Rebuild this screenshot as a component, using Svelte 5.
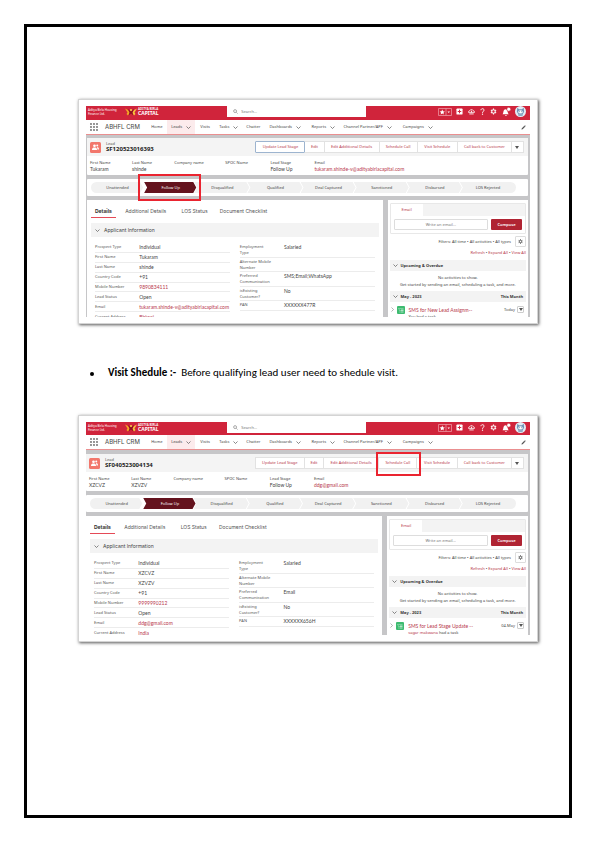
<script>
  const nav = [
    { t: 'Home' },
    { t: 'Leads', menu: true, on: true },
    { t: 'Visits' },
    { t: 'Tasks', menu: true },
    { t: 'Chatter' },
    { t: 'Dashboards', menu: true },
    { t: 'Reports', menu: true },
    { t: 'Channel Partner/APF', menu: true },
    { t: 'Campaigns', menu: true }
  ];
  const actions = ['Update Lead Stage', 'Edit', 'Edit Additional Details', 'Schedule Call', 'Visit Schedule', 'Call back to Customer'];
  const stages = ['Unattended', 'Follow Up', 'Disqualified', 'Qualified', 'Deal Captured', 'Sanctioned', 'Disbursed', 'LOS Rejected'];
  const tabs = ['Details', 'Additional Details', 'LOS Status', 'Document Checklist'];

  const leads = [
    {
      key: 'a', id: 'SF120523016393', first: 'Tukaram', last: 'shinde',
      email: 'tukaram.shinde-v@adityabirlacapital.com', mobile: '9890834111', address: 'Bhiwai',
      comm: 'SMS;Email;WhatsApp', pan: 'XXXXXX477R',
      task: 'SMS for New Lead Assignm--', date: 'Today', who: '', had: 'You had a task',
      markStage: 'Follow Up', markAction: '', focus: true
    },
    {
      key: 'b', id: 'SF040523004134', first: 'XZCVZ', last: 'XZVZV',
      email: 'ddg@gmail.com', mobile: '9999990212', address: 'India',
      comm: 'Email', pan: 'XXXXXX656H',
      task: 'SMS for Lead Stage Update --', date: '04-May', who: 'sagar makwana', had: 'had a task',
      markStage: '', markAction: 'Schedule Call', focus: false
    }
  ];

  const summary = (l) => [
    ['First Name', l.first], ['Last Name', l.last], ['Company name', ''],
    ['SPOC Name', ''], ['Lead Stage', 'Follow Up'], ['Email', l.email, true]
  ];
  const left = (l) => [
    ['Prospect Type', 'Individual'], ['First Name', l.first], ['Last Name', l.last], ['Country Code', '+91'],
    ['Mobile Number', l.mobile, true], ['Lead Status', 'Open'], ['Email', l.email, true], ['Current Address', l.address, true]
  ];
  const right = (l) => [
    ['Employment\nType', 'Salaried'], ['Alternate Mobile\nNumber', ''], ['Preferred\nCommunication', l.comm],
    ['isExisting\nCustomer?', 'No'], ['PAN', l.pan]
  ];
</script>

{#snippet chevron()}
  <svg class="chev" viewBox="0 0 10 6" aria-hidden="true"><path d="M1 1l4 4 4-4" fill="none" stroke="currentColor" stroke-width="1.4" /></svg>
{/snippet}

{#snippet gear()}
  <svg viewBox="0 0 16 16" aria-hidden="true">
    <circle cx="8" cy="8" r="4" fill="none" stroke="currentColor" stroke-width="2.4" />
    <path d="M8 1v3M8 12v3M2 4.500l2.500 1.500M11.500 10l2.500 1.500M2 11.500l2.500-1.500M11.500 6l2.500-1.500" stroke="currentColor" stroke-width="2.600" />
  </svg>
{/snippet}

{#snippet screen(l)}
  <section class="shot">
    <div class="app" class:inset={l.key === 'a'}>
      <header class="top">
        <p class="firm">Aditya Birla Housing<br />Finance Ltd.</p>
        <div class="logo">
          <svg viewBox="0 0 24 16" aria-hidden="true">
            <path d="M0 1l6 3 4 6-4 5-3-3 2-3z" fill="#f4a526" />
            <path d="M24 1l-6 3-4 6 4 5 3-3-2-3z" fill="#f7c23c" />
            <path d="M6 2l6 5 6-5-3 7 2 6-5-4-5 4 2-6z" fill="#8c1220" />
            <circle cx="12" cy="4" r="2" fill="#f9d34a" />
          </svg>
          <p><small>ADITYA BIRLA</small><b>CAPITAL</b></p>
        </div>
        <label class="search">
          <svg viewBox="0 0 12 12" aria-hidden="true"><circle cx="5" cy="5" r="3.500" fill="none" stroke="#666" stroke-width="1.300" /><path d="M8 8l3 3" stroke="#666" stroke-width="1.300" /></svg>
          <input type="search" placeholder="Search..." aria-label="Search" />
        </label>
        <div class="tools">
          <button class="fav" aria-label="Favorites">
            <svg viewBox="0 0 28 16" aria-hidden="true">
              <path d="M1 1h26v14H1zM16 1v14" fill="none" stroke="#ee9aa5" stroke-width="1.500" />
              <path d="M8.500 3l1.500 3.400 3.700.4-2.800 2.500.8 3.700-3.200-1.900-3.200 1.900.8-3.700-2.800-2.500 3.700-.4zM19 7h5l-2.500 3z" fill="#fff" />
            </svg>
          </button>
          <button aria-label="Add"><svg viewBox="0 0 16 16" aria-hidden="true"><rect x="1" y="1" width="14" height="14" rx="2" fill="#fff" /><path d="M8 4v8M4 8h8" stroke="#d0243b" stroke-width="2.200" /></svg></button>
          <button aria-label="Guidance"><svg viewBox="0 0 16 16" aria-hidden="true"><path d="M1 10a4 4 0 0 1 3-4 4.500 4.500 0 0 1 8 0 4 4 0 0 1 3 4z" fill="none" stroke="#fff" stroke-width="1.800" /><path d="M3 13.500h10M8 6v4" stroke="#fff" stroke-width="2" /></svg></button>
          <button aria-label="Help"><svg viewBox="0 0 16 16" aria-hidden="true"><path d="M4.500 5c0-5 7.500-4 7 0 0 2.500-3.500 2.500-3.500 6" fill="none" stroke="#fff" stroke-width="2.200" /><circle cx="8" cy="14" r="1.500" fill="#fff" /></svg></button>
          <button aria-label="Setup">{@render gear()}</button>
          <button aria-label="Notifications" class="bell"><svg viewBox="0 0 16 16" aria-hidden="true"><path d="M1 13c2-2 1-9 5-9s4 7 6 9zM5 14h4l-2 2z" fill="#fff" /><circle cx="12" cy="4" r="3.500" fill="#fff" stroke="#d0243b" stroke-width="1" /></svg></button>
          <button aria-label="Profile" class="me">
            <svg viewBox="0 0 24 24" aria-hidden="true"><circle cx="12" cy="12" r="12" fill="#e3edf5" /><path d="M5 4l4 3h6l4-3 1 8-3 6H7l-3-6z" fill="#7195b8" /><ellipse cx="12" cy="13" rx="5" ry="3.500" fill="#fff" /><circle cx="10" cy="12.500" r="1" fill="#3a5878" /><circle cx="14" cy="12.500" r="1" fill="#3a5878" /><path d="M6 20q6 4 12 0l-2-3H8z" fill="#8dabc6" /></svg>
          </button>
        </div>
      </header>

      <nav>
        <svg class="waffle" viewBox="0 0 16 16" aria-hidden="true">
          {#each [2, 8, 14] as y}{#each [2, 8, 14] as x}<circle cx={x} cy={y} r="1.800" fill="#666" />{/each}{/each}
        </svg>
        <span class="brand">ABHFL CRM</span>
        {#each nav as n}
          <a href="#{n.t}" class:on={n.on}>{n.t}{#if n.menu}{@render chevron()}{/if}</a>
        {/each}
        <svg class="pencil" viewBox="0 0 12 12" aria-hidden="true"><path d="M1 11l1-3 6-6 2 2-6 6zM8.500 1.500l1-1 2 2-1 1z" fill="#555" /></svg>
      </nav>

      <div class="body">
        <section class="card lead">
          <div class="head">
            <svg class="badge" viewBox="0 0 22 22" aria-hidden="true"><rect width="22" height="22" rx="3" fill="#f2776c" /><circle cx="9" cy="7.500" r="2.700" fill="#fff" /><path d="M4 16c0-4 2-5 5-5s5 1 5 5z" fill="#fff" /><circle cx="14.500" cy="7" r="2" fill="#fff" /><path d="M15 15h3c0-3-1-5-4-5z" fill="#fff" /></svg>
            <h2><span>Lead</span>{l.id}</h2>
            <div class="actions">
              {#each actions as a, i}
                <div class="cell"><button class:focus={l.focus && i === 0}>{a}</button>{#if a === l.markAction}<i class="mark action"></i>{/if}</div>
              {/each}
              <div class="cell"><button aria-label="More actions"><svg viewBox="0 0 8 6" aria-hidden="true"><path d="M0 0h8L4 6z" fill="#555" /></svg></button></div>
            </div>
          </div>
          <dl class="summary">
            {#each summary(l) as [k, v, link]}
              <div><dt>{k}</dt><dd>{#if link}<a href="mailto:{v}">{v}</a>{:else}{v}{/if}</dd></div>
            {/each}
          </dl>
        </section>

        <ol class="card path">
          {#each stages as s}
            <li><button class:current={s === 'Follow Up'}>{s}</button>{#if s === l.markStage}<i class="mark stage"></i>{/if}</li>
          {/each}
        </ol>

        <div class="cols">
          <section class="main">
            <div class="tabs">
              {#each tabs as t, i}<div><a href="#{t}" class:on={i === 0}>{t}</a></div>{/each}
            </div>
            <h3>{@render chevron()}Applicant Information</h3>
            <div class="info">
              <dl class="left">
                {#each left(l) as [k, v, link]}
                  <div><dt>{k}</dt><dd>{#if link}<a href="#{k}">{v}</a>{:else}{v}{/if}</dd></div>
                {/each}
              </dl>
              <dl class="right">
                {#each right(l) as [k, v]}<div><dt>{k}</dt><dd>{v}</dd></div>{/each}
              </dl>
            </div>
          </section>

          <aside>
            <div class="mail">
              <div class="strip"><a href="#email">Email</a></div>
              <div class="write">
                <input type="text" placeholder="Write an email..." aria-label="Write an email" />
                <button>Compose</button>
              </div>
            </div>
            <div class="filters"><span>Filters: All time • All activities • All types</span><button aria-label="Filter settings">{@render gear()}</button></div>
            <p class="links"><a href="#refresh">Refresh</a> • <a href="#expand">Expand All</a> • <a href="#all">View All</a></p>
            <h4>{@render chevron()}Upcoming &amp; Overdue</h4>
            <p class="none">No activities to show.<br />Get started by sending an email, scheduling a task, and more.</p>
            <h4>{@render chevron()}May - 2023<span>This Month</span></h4>
            <div class="task">
              <svg class="more" viewBox="0 0 6 10" aria-hidden="true"><path d="M1 1l4 4-4 4" fill="none" stroke="#666" /></svg>
              <svg class="tick" viewBox="0 0 16 16" aria-hidden="true"><rect width="16" height="16" rx="2" fill="#3dbb70" /><path d="M3 5l1.500 1.500L7 4M8 6h5M7 9h6M7 12h6M4 9h1M4 12h1" fill="none" stroke="#fff" stroke-width="1.200" /></svg>
              <a href="#task">{l.task}</a>
              <time>{l.date}</time>
              <button aria-label="Task actions"><svg viewBox="0 0 8 6" aria-hidden="true"><path d="M0 0h8L4 6z" fill="#555" /></svg></button>
            </div>
            <p class="had">{#if l.who}<a href="#who">{l.who}</a>{/if} {l.had}</p>
          </aside>
        </div>
      </div>
    </div>
  </section>
{/snippet}

<main class="page">
  <article>
    {@render screen(leads[0])}
    <ul class="note"><li><b>Visit Shedule :-</b>&nbsp; Before qualifying lead user need to shedule visit.</li></ul>
    {@render screen(leads[1])}
  </article>
</main>

<style>
  :global(body) { margin: 0; background: #fff; }
  .page { padding: 24px; box-sizing: border-box; min-height: 100vh; display: flex; }
  article { flex: 1; min-width: 0; border: 3px solid #000; padding: 72px 31px 24px 51px; }
  p, h2, h3, h4, dl, dd, ol, ul { margin: 0; padding: 0; list-style: none; }
  svg { display: block; flex: none; }
  a { color: #b8394c; text-decoration: none; }
  button, input { font: inherit; margin: 0; padding: 0; box-sizing: border-box; min-width: 0; border: 0; background: none; color: inherit; }

  .note { font: 11px/14px Carlito, Lato, "Liberation Sans", sans-serif; color: #000; margin: 42px 0 35px; }
  .note li { display: flex; white-space: pre; padding-left: 12px; }
  .note li::before { content: ""; width: 4px; height: 4px; border-radius: 50%; background: #000; margin: 6px 14px 0 0; }

  .shot { background: #fff; border: 1px solid #d4d4d4; box-shadow: 1px 1px 3px #555; padding: 6px 7px; }
  .app { height: 213px; overflow: hidden; font: 4px/6px "Noto Sans", "Open Sans", sans-serif; color: #444; white-space: nowrap; }
  .app.inset { height: 211px; }

  .top { display: grid; grid-template-columns: 39fr 102fr 138fr 72fr 92fr; height: 13px; background: #d0243b; color: #fff; }
  .inset .top { height: 14px; }
  .top > * { min-width: 0; }
  .firm { font-size: 3px; line-height: 4px; padding: 2px; }
  .logo { display: flex; gap: 1px; padding-top: 2px; }
  .logo svg { width: 12px; height: 8px; }
  .logo p { line-height: 4px; }
  .logo small { display: block; font-size: 3px; line-height: 3px; font-weight: 600; }
  .logo b { display: block; font-size: 5px; line-height: 5px; }
  .search { background: #fff; display: flex; align-items: center; gap: 3px; padding-left: 6px; height: 11px; }
  .search svg { width: 5px; height: 5px; }
  .search input { flex: 1; color: #555; }
  input::placeholder { color: #777; opacity: 1; }
  .tools { grid-column: 5; display: flex; align-items: center; justify-content: space-between; padding-right: 4px; height: 11px; }
  .tools button { width: 7px; }
  .tools .fav { width: 14px; }
  .tools .fav svg { height: 8px; }
  .tools .bell { width: 9px; }
  .tools .me { width: 11px; }

  nav { display: grid; grid-template-columns: 19fr 46fr 16fr 33fr 19fr 27fr 23fr 42fr 32fr 59fr 118fr 9fr; height: 14px; align-items: center; border-bottom: 1px solid #ea8f90; }
  nav > * { min-width: 0; }
  nav a { display: flex; align-items: center; gap: 4px; color: #444; }
  nav .on { height: 14px; background: #fcebec; justify-self: start; padding: 0 4px; }
  .brand { font: 6px/8px Inter, sans-serif; color: #444; }
  .chev { width: 5px; height: 3px; color: #555; }
  .waffle { width: 8px; height: 8px; margin-left: 4px; }
  .pencil { width: 5px; height: 5px; }

  .body { background: #c6c6c8; padding: 4px 2px 0 0; }
  .inset .body { padding: 3px 2px 0 1px; }
  .card { background: #fff; border-radius: 1px; margin-bottom: 4px; }
  .head { display: flex; align-items: center; background: #f4f4f4; height: 18px; padding: 0 4px 0 3px; }
  .badge { width: 11px; height: 11px; margin-right: 5px; }
  h2 { font-size: 6px; line-height: 7px; color: #222; flex: 149; min-width: 0; }
  h2 span { display: block; font-size: 4px; line-height: 5px; font-weight: 400; color: #555; }
  .actions { flex: 268; display: grid; grid-template-columns: 50fr 19fr 55fr 38fr 40fr 54fr 12fr; height: 12px; }
  .cell { position: relative; min-width: 0; }
  .cell button { width: 100%; height: 12px; background: #fff; border: 1px solid #e2e2e2; border-left-width: 0; color: #b8394c; }
  .cell:first-child button { border-left-width: 1px; }
  .cell .focus { border-color: #9db4cf; border-radius: 1px; }
  .cell svg { width: 4px; height: 3px; margin: 0 auto; }
  .mark { position: absolute; border: 2px solid #ea2430; pointer-events: none; box-sizing: border-box; z-index: 1; }
  .action { inset: -5px -4px -6px -3px; }
  .stage { inset: -8px -4px -8px -6px; }

  .summary { display: grid; grid-template-columns: 42fr 42fr 51fr 45fr 44fr 213fr; padding: 4px 0 2px 3px; height: 13px; }
  .summary div { min-width: 0; }
  .summary dd { font-family: Lato, sans-serif; font-size: 5px; line-height: 7px; color: #444; }

  .path { display: flex; padding: 3px 12px 3px 4px; }
  .path li { flex: 1; min-width: 0; position: relative; }
  .path button { display: block; width: 100%; height: 11px; background: #f1f1f1; clip-path: polygon(0 0, calc(100% - 4px) 0, calc(100% - 1px) 50%, calc(100% - 4px) 100%, 0 100%, 0 100%); }
  .path li + li button { width: calc(100% + 3px); margin-left: -3px; clip-path: polygon(0 0, calc(100% - 4px) 0, calc(100% - 1px) 50%, calc(100% - 4px) 100%, 0 100%, 3px 50%); }
  .path li:first-child button { border-radius: 6px 0 0 6px; }
  .path li:last-child button { border-radius: 0 6px 6px 0; clip-path: polygon(0 0, 100% 0, 100% 100%, 0 100%, 3px 50%); }
  .path li + li .current { background: #64131e; color: #fff; margin-left: 0; width: 100%; }

  .cols { display: flex; gap: 5px; }
  .main { flex: 295; min-width: 0; background: #fff; padding: 4px 4px 0; }
  .tabs { display: grid; grid-template-columns: 34fr 56fr 38fr 158fr; font: 5px/14px Inter, sans-serif; }
  .tabs div { min-width: 0; }
  .tabs a { display: inline-block; color: #555; height: 14px; }
  .tabs .on { font-weight: 700; color: #333; border-bottom: 1px solid #e54a57; padding: 0 4px; box-sizing: border-box; }
  h3 { display: flex; align-items: center; gap: 4px; font: 5px/6px Inter, sans-serif; height: 14px; margin-top: 5px; padding-left: 4px; background: #f3f3f3; color: #444; }
  .info { display: grid; grid-template-columns: 134fr 134fr; column-gap: 10px; padding: 6px 4px 0; }
  .info dl { min-width: 0; display: grid; }
  .info div { display: grid; grid-template-columns: 44fr 90fr; border-bottom: 1px solid #ececec; box-sizing: border-box; min-width: 0; }
  .info dt, .info dd { min-width: 0; }
  .info dt { color: #555; }
  .info dd { font-family: Lato, sans-serif; color: #444; font-size: 5px; }
  .left { height: 79px; grid-template-rows: repeat(8, 1fr); }
  .left div { align-items: center; }
  .right { height: 68px; grid-template-rows: repeat(4, 29fr) 20fr; }
  .right div { padding-top: 1px; }
  .right dt { white-space: pre; }

  aside { flex: 140; min-width: 0; background: #fff; padding: 3px 2px 0; }
  .mail { border: 1px solid #e8e8e8; border-radius: 1px; }
  .strip { background: #f3f3f3; height: 12px; display: flex; }
  .strip a { background: #fff; width: 32px; line-height: 12px; text-align: center; }
  .write { display: flex; gap: 3px; padding: 3px; }
  .write input { flex: 93; height: 11px; border: 1px solid #ddd; border-radius: 1px; text-align: center; }
  .write button { flex: 31; height: 11px; background: #b02433; color: #fff; border-radius: 1px; font-weight: 600; }
  .filters { display: flex; align-items: center; justify-content: flex-end; gap: 4px; margin-top: 2px; }
  .filters button { width: 11px; height: 11px; border: 1px solid #ddd; border-radius: 1px; }
  .filters svg { width: 5px; height: 5px; margin: 0 auto; }
  .links { text-align: right; margin: 3px 0 4px; }
  h4 { display: flex; align-items: center; gap: 3px; height: 11px; padding: 0 3px; background: #f3f3f3; font-size: 4px; color: #333; }
  h4 span { margin-left: auto; }
  .none { text-align: center; line-height: 7px; margin: 3px 0; }
  .task { display: flex; align-items: center; padding: 3px 2px 0 1px; height: 9px; }
  .task a { font: 5px/6px Lato, sans-serif; }
  .more { width: 3px; height: 5px; margin-right: 3px; }
  .tick { width: 8px; height: 8px; margin-right: 4px; }
  .task time { margin-left: auto; }
  .task button { width: 7px; height: 7px; border: 1px solid #ccc; border-radius: 1px; margin-left: 2px; }
  .task button svg { width: 4px; height: 3px; margin: 0 auto; }
  .had { padding-left: 19px; line-height: 5px; }
</style>
